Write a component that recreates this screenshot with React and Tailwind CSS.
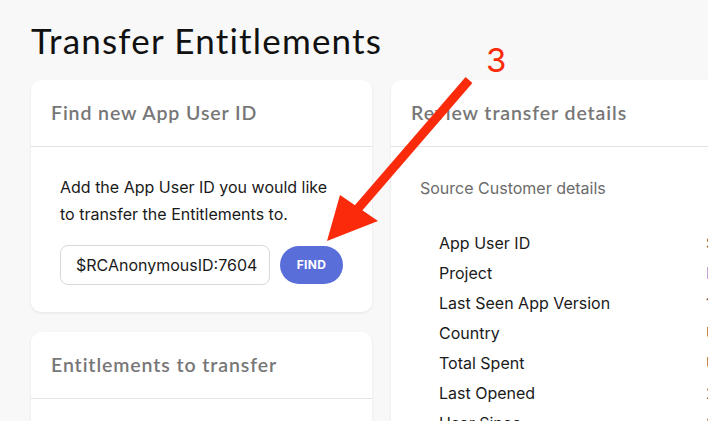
import React from 'react';

const rows = [
  { label: 'App User ID', value: '$RCAnonymousID:76045a1c', blue: false },
  { label: 'Project', value: 'Project app', blue: true },
  { label: 'Last Seen App Version', value: '1.0', blue: false },
  { label: 'Country', value: 'United States', blue: false },
  { label: 'Total Spent', value: 'US$0.00', blue: false },
  { label: 'Last Opened', value: '2 days ago', blue: false },
  { label: 'User Since', value: '2 days ago', blue: false },
];

const CardHeader = ({ children }) => (
  <div className="h-[67px] flex items-center px-5 border-b border-[#e3e3e3]">
    <h2 className="text-[19.5px] font-semibold text-[#777777] tracking-[0.9px] font-['Lato',sans-serif]">{children}</h2>
  </div>
);

export default function App() {
  return (
    <div className="relative w-[708px] h-[421px] overflow-hidden bg-[#f8f8f8] font-['Inter',sans-serif] text-[#1a1a1a]">
      <h1 className="pl-[31px] pt-[20px] h-[80px] text-[35px] leading-[40px] font-normal tracking-[1.2px] text-[#111] font-['Lato',sans-serif]">
        Transfer Entitlements
      </h1>

      <div className="flex gap-[19px] pl-[31px]">
        {/* left column */}
        <div className="w-[341px] shrink-0 flex flex-col gap-[20px]">
          <div className="bg-white rounded-[10px] shadow-[0_1px_3px_rgba(0,0,0,0.08)]">
            <CardHeader>Find new App User ID</CardHeader>
            <div className="px-[29px] pt-[27px] pb-[27px]">
              <p className="text-[16px] leading-[27px] text-[#1a1a1a]">
                Add the App User ID you would like to transfer the Entitlements to.
              </p>
              <div className="flex items-center gap-[10px] mt-[17px]">
                <div className="w-[210px] h-[40px] rounded-[8px] border border-[#d9d9d9] flex items-center pl-[15px] pr-[4px] overflow-hidden">
                  <span className="text-[16px] whitespace-nowrap overflow-hidden">$RCAnonymousID:7604</span>
                </div>
                <button className="w-[63px] h-[38px] rounded-full bg-[#5a6ed9] text-white text-[12px] font-bold tracking-[0.3px]">
                  FIND
                </button>
              </div>
            </div>
          </div>

          <div className="bg-white rounded-[10px] shadow-[0_1px_3px_rgba(0,0,0,0.08)] h-[120px]">
            <CardHeader>Entitlements to transfer</CardHeader>
          </div>
        </div>

        {/* right column */}
        <div className="w-[420px] shrink-0 bg-white rounded-[10px] shadow-[0_1px_3px_rgba(0,0,0,0.08)] h-[400px]">
          <CardHeader>Review transfer details</CardHeader>
          <div className="px-[29px] pt-[31px]">
            <p className="text-[16px] leading-[20px] text-[#6b6b6b]">Source Customer details</p>
            <div className="mt-[30px] pl-[19px]">
              {rows.map((r) => (
                <div key={r.label} className="flex h-[30px] items-center">
                  <span className="w-[267px] shrink-0 text-[16px]">{r.label}</span>
                  <span className={r.blue ? 'text-[16px] text-[#5a6ed9] whitespace-nowrap' : 'text-[16px] text-[#444] whitespace-nowrap'}>
                    {r.value}
                  </span>
                </div>
              ))}
            </div>
          </div>
        </div>
      </div>

      {/* annotation */}
      <span className="absolute left-[486px] top-[41px] text-[33px] leading-[38px] text-[#fa2a0a] font-['Inter',sans-serif]">3</span>
      <svg className="absolute left-0 top-0 pointer-events-none" width="708" height="421" viewBox="0 0 708 421">
        <line x1="469" y1="80" x2="355" y2="212" stroke="#fa2a0a" strokeWidth="9" />
        <polygon points="327,241 340,195 378,221" fill="#fa2a0a" />
      </svg>
    </div>
  );
}
